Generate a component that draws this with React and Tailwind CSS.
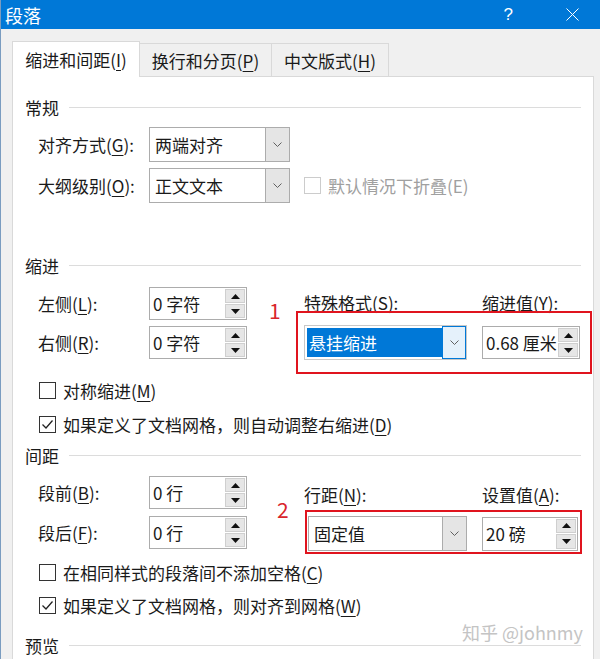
import React from "react";

const Chevron = () => (
  <svg width="9" height="5" viewBox="0 0 9 5">
    <path d="M0.5 0.5 L4.5 4.5 L8.5 0.5" stroke="#606060" fill="none" strokeWidth="1" />
  </svg>
);

const Arrow = ({ up }) => (
  <svg width="9" height="5" viewBox="0 0 9 5">
    {up ? <path d="M0 5 L4.5 0 L9 5 Z" fill="#111" /> : <path d="M0 0 L4.5 5 L9 0 Z" fill="#111" />}
  </svg>
);

const Acc = ({ children }) => <u className="underline underline-offset-[3px] decoration-1">{children}</u>;

const Select = ({ text, className = "" }) => (
  <div className={"flex h-[35px] border border-[#acacac] bg-white " + className}>
    <div className="flex-1 flex items-center pl-[5px]">{text}</div>
    <div className="w-[24px] bg-[#e5e5e5] border-l border-[#acacac] flex items-center justify-center">
      <Chevron />
    </div>
  </div>
);

const Spin = ({ value, className = "w-[98px] h-[33px]" }) => (
  <div className={"flex border border-[#acacac] bg-white " + className}>
    <div className="flex-1 flex items-center pl-[3px] overflow-hidden whitespace-nowrap">{value}</div>
    <div className="w-[22px] flex flex-col p-px gap-px">
      <div className="flex-1 bg-[#e6e6e6] border border-[#cfcfcf] flex items-center justify-center">
        <Arrow up />
      </div>
      <div className="flex-1 bg-[#e6e6e6] border border-[#cfcfcf] flex items-center justify-center">
        <Arrow />
      </div>
    </div>
  </div>
);

const Check = ({ checked, disabled }) => (
  <span
    className={
      "w-[17px] h-[17px] shrink-0 border bg-white flex items-center justify-center " +
      (disabled ? "border-[#cccccc]" : "border-[#333333]")
    }
  >
    {checked && (
      <svg width="13" height="13" viewBox="0 0 13 13">
        <path d="M1.5 6.5 L5 10 L11.5 2.5" stroke="#222" fill="none" strokeWidth="1.3" />
      </svg>
    )}
  </span>
);

const CheckRow = ({ checked, children }) => (
  <div className="h-[24px] flex items-center gap-[7px]">
    <Check checked={checked} />
    <span>{children}</span>
  </div>
);

const Heading = ({ children, className = "" }) => (
  <div className={"h-[24px] flex items-center pl-[12px] pr-[12px] " + className}>
    <span>{children}</span>
    <div className="flex-1 h-px bg-[#dcdcdc] ml-[10px]" />
  </div>
);

const Label = ({ children }) => <span className="w-[111px] shrink-0">{children}</span>;

export default function App() {
  return (
    <div className="w-[600px] h-[659px] overflow-hidden bg-[#f0f0f0] flex flex-col border-l border-[#7a9cc0] font-['Noto_Sans_CJK_SC',sans-serif] text-[17px] leading-none text-[#1a1a1a]">
      <div className="h-[29px] shrink-0 bg-[#0078d7] flex items-center text-white">
        <span className="pl-[4px] text-[18px]">段落</span>
        <span className="ml-auto text-[17px] font-['Liberation_Sans',sans-serif]">?</span>
        <svg className="ml-[53px] mr-[21px]" width="13" height="13" viewBox="0 0 13 13">
          <path d="M0.5 0.5 L12.5 12.5 M12.5 0.5 L0.5 12.5" stroke="white" strokeWidth="1" />
        </svg>
      </div>

      <div className="mt-[12px] ml-[11px] flex items-end h-[35px] shrink-0">
        <div className="relative z-10 -mb-px w-[128px] h-[36px] bg-white border border-b-0 border-[#d9d9d9] flex items-center justify-center">
          <span>
            缩进和间距(<Acc>I</Acc>)
          </span>
        </div>
        <div className="w-[132px] h-[33px] border-t border-r border-[#d9d9d9] flex items-center justify-center">
          <span>
            换行和分页(<Acc>P</Acc>)
          </span>
        </div>
        <div className="w-[117px] h-[33px] border-t border-r border-[#d9d9d9] flex items-center justify-center">
          <span>
            中文版式(<Acc>H</Acc>)
          </span>
        </div>
      </div>

      <div className="relative ml-[11px] w-[582px] flex-1 bg-white border border-b-0 border-[#d9d9d9]">
        <Heading className="mt-[18px]">常规</Heading>
        <div className="mt-[8px] pl-[25px] flex flex-col gap-[6px]">
          <div className="flex items-center">
            <Label>
              对齐方式(<Acc>G</Acc>):
            </Label>
            <Select text="两端对齐" className="w-[141px]" />
          </div>
          <div className="flex items-center">
            <Label>
              大纲级别(<Acc>O</Acc>):
            </Label>
            <Select text="正文文本" className="w-[141px]" />
            <div className="ml-[14px] flex items-center gap-[7px] text-[#a0a0a0]">
              <Check disabled />
              <span>默认情况下折叠(E)</span>
            </div>
          </div>
        </div>

        <Heading className="mt-[50px]">缩进</Heading>
        <div className="mt-[10px] pl-[25px] flex">
          <div className="flex flex-col gap-[6px]">
            <div className="flex items-center">
              <Label>
                左侧(<Acc>L</Acc>):
              </Label>
              <Spin value="0 字符" />
            </div>
            <div className="flex items-center">
              <Label>
                右侧(<Acc>R</Acc>):
              </Label>
              <Spin value="0 字符" />
            </div>
          </div>
          <div className="w-[57px] pl-[22px] pt-[13px] text-[21px] text-[#d9252b]">1</div>
          <div className="relative">
            <div className="mt-[5px] h-[20px] flex items-center">
              <span className="w-[178px]">特殊格式(S):</span>
              <span>缩进值(Y):</span>
            </div>
            <div className="mt-[13px] flex items-center">
              <div className="w-[163px] h-[35px] flex border border-[#c8c8c8] bg-white">
                <div className="flex-1 m-[2px] mr-0 bg-[#0078d7] text-white flex items-center pl-[2px]">悬挂缩进</div>
                <div className="w-[24px] bg-[#e5f1fb] border border-[#0078d7] flex items-center justify-center">
                  <Chevron />
                </div>
              </div>
              <Spin value="0.68 厘米" className="ml-[15px] w-[98px] h-[33px]" />
            </div>
            <div className="absolute left-[-8px] top-[24px] w-[296px] h-[63px] border-2 border-[#e0141e] pointer-events-none" />
          </div>
        </div>

        <div className="mt-[18px] pl-[26px] flex flex-col gap-[10px]">
          <CheckRow>
            对称缩进(<Acc>M</Acc>)
          </CheckRow>
          <CheckRow checked>
            如果定义了文档网格，则自动调整右缩进(<Acc>D</Acc>)
          </CheckRow>
        </div>

        <Heading className="mt-[7px]">间距</Heading>
        <div className="mt-[9px] pl-[25px] flex">
          <div className="flex flex-col gap-[7px]">
            <div className="flex items-center">
              <Label>
                段前(<Acc>B</Acc>):
              </Label>
              <Spin value="0 行" />
            </div>
            <div className="flex items-center">
              <Label>
                段后(<Acc>F</Acc>):
              </Label>
              <Spin value="0 行" />
            </div>
          </div>
          <div className="w-[57px] pl-[30px] pt-[23px] text-[21px] text-[#d9252b]">2</div>
          <div className="relative">
            <div className="mt-[8px] h-[20px] flex items-center">
              <span className="w-[178px]">
                行距(<Acc>N</Acc>):
              </span>
              <span>
                设置值(<Acc>A</Acc>):
              </span>
            </div>
            <div className="mt-[12px] flex items-center">
              <Select text="固定值" className="ml-[4px] w-[159px]" />
              <Spin value="20 磅" className="ml-[15px] w-[96px] h-[34px]" />
            </div>
            <div className="absolute left-[1px] top-[34px] w-[277px] h-[44px] border-2 border-[#e0141e] pointer-events-none" />
          </div>
        </div>

        <div className="mt-[9px] pl-[26px] flex flex-col gap-[9px]">
          <CheckRow>
            在相同样式的段落间不添加空格(<Acc>C</Acc>)
          </CheckRow>
          <CheckRow checked>
            如果定义了文档网格，则对齐到网格(<Acc>W</Acc>)
          </CheckRow>
        </div>

        <Heading className="mt-[16px]">预览</Heading>

        <div className="absolute left-[449px] top-[546px] text-[18px] text-[#c4c4c4] whitespace-nowrap">
          知乎 @johnmy
        </div>
      </div>
    </div>
  );
}
